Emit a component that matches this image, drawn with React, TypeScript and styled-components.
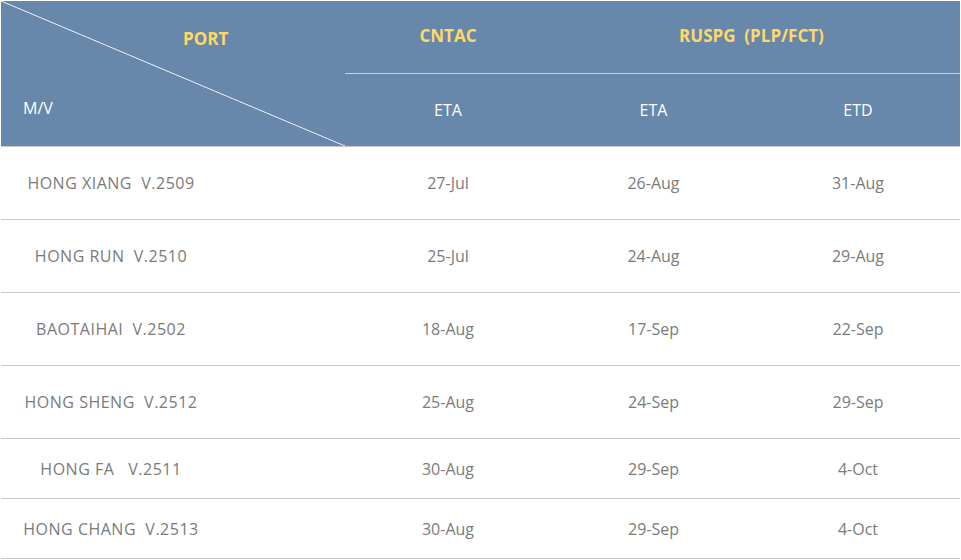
import React from "react";
import styled, { createGlobalStyle } from "styled-components";

const GlobalStyle = createGlobalStyle`
  html, body { margin: 0; padding: 0; background: #ffffff; }
  body { font-family: "Open Sans", "Noto Sans", Arial, sans-serif; }
`;

const Page = styled.div`
  width: 961px;
  height: 560px;
  padding: 1px 0 0 1px;
  box-sizing: border-box;
  background: #ffffff;
`;

const Schedule = styled.div`
  width: 959px;
`;

const Header = styled.div`
  display: grid;
  grid-template-columns: 344px 206px 205px 204px;
  grid-template-rows: 73px 72px;
  background: #6787ab;
  border-bottom: 1px solid #c9c9c9;
`;

const CornerCell = styled.div`
  grid-row: 1 / 3;
  grid-column: 1;
  display: flex;
  flex-direction: column;
  justify-content: space-between;
  background: linear-gradient(
    to top right,
    transparent calc(50% - 0.8px),
    #d7dfe9 calc(50% - 0.3px),
    #d7dfe9 calc(50% + 0.3px),
    transparent calc(50% + 0.8px)
  );
`;

const PortLabel = styled.span`
  padding: 26px 0 0 182px;
  font-size: 17px;
  line-height: 23px;
  font-weight: 700;
  color: #ffd966;
`;

const VesselLabel = styled.span`
  padding: 0 0 27px 22px;
  font-size: 16px;
  line-height: 22px;
  color: #ffffff;
`;

const GroupCell = styled.div<{ $span?: number; $shift?: number }>`
  grid-row: 1;
  grid-column: span ${(p) => p.$span ?? 1};
  display: flex;
  align-items: flex-start;
  justify-content: center;
  padding-top: 23px;
  box-sizing: border-box;
  border-bottom: 1px solid #c6d2e0;
  font-size: 17px;
  line-height: 23px;
  font-weight: 700;
  color: #ffd966;
  padding-right: ${(p) => p.$shift ?? 0}px;
  white-space: pre;
`;

const SubCell = styled.div`
  grid-row: 2;
  display: flex;
  align-items: center;
  justify-content: center;
  font-size: 16px;
  color: #ffffff;
`;

const Row = styled.div<{ $h: number }>`
  display: grid;
  grid-template-columns: 344px 206px 205px 204px;
  height: ${(p) => p.$h}px;
  border-bottom: 1px solid #c9c9c9;
`;

const Cell = styled.div`
  display: flex;
  align-items: center;
  justify-content: center;
  font-size: 16px;
  color: #7b7b7b;
  white-space: pre;
`;

const VesselCell = styled(Cell)`
  padding-right: 124px;
  letter-spacing: 0.5px;
`;

const rows = [
  { ship: "HONG XIANG  V.2509", a: "27-Jul", b: "26-Aug", c: "31-Aug", h: 72 },
  { ship: "HONG RUN  V.2510", a: "25-Jul", b: "24-Aug", c: "29-Aug", h: 72 },
  { ship: "BAOTAIHAI  V.2502", a: "18-Aug", b: "17-Sep", c: "22-Sep", h: 72 },
  { ship: "HONG SHENG  V.2512", a: "25-Aug", b: "24-Sep", c: "29-Sep", h: 72 },
  { ship: "HONG FA   V.2511", a: "30-Aug", b: "29-Sep", c: "4-Oct", h: 59 },
  { ship: "HONG CHANG  V.2513", a: "30-Aug", b: "29-Sep", c: "4-Oct", h: 59 },
];

export default function App() {
  return (
    <Page>
      <GlobalStyle />
      <Schedule>
        <Header>
          <CornerCell>
            <PortLabel>PORT</PortLabel>
            <VesselLabel>M/V</VesselLabel>
          </CornerCell>
          <GroupCell>CNTAC</GroupCell>
          <GroupCell $span={2} $shift={8}>RUSPG  (PLP/FCT)</GroupCell>
          <SubCell>ETA</SubCell>
          <SubCell>ETA</SubCell>
          <SubCell>ETD</SubCell>
        </Header>
        {rows.map((r) => (
          <Row key={r.ship} $h={r.h}>
            <VesselCell>{r.ship}</VesselCell>
            <Cell>{r.a}</Cell>
            <Cell>{r.b}</Cell>
            <Cell>{r.c}</Cell>
          </Row>
        ))}
      </Schedule>
    </Page>
  );
}
